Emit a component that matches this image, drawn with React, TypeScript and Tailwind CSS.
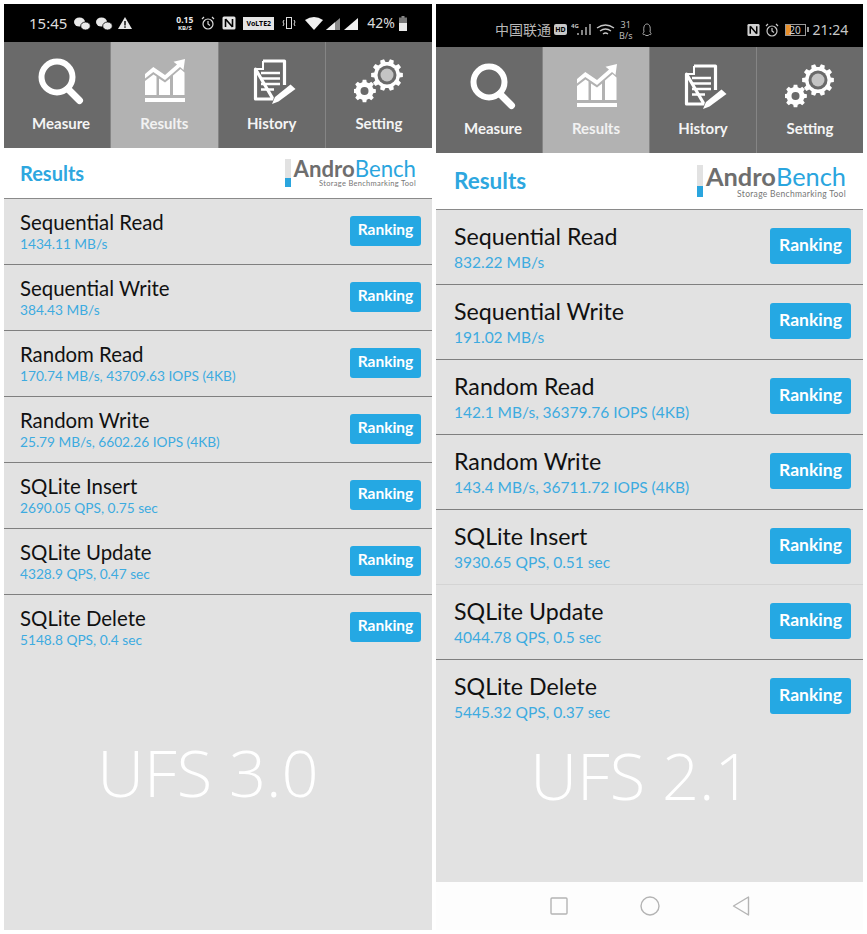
import React from "react";

const font = { fontFamily: 'Lato, "Noto Sans CJK SC", sans-serif' };

function gearPath(cx: number, cy: number, R: number, r: number, n: number) {
  const pts: string[] = [];
  const step = (2 * Math.PI) / n;
  for (let i = 0; i < n; i++) {
    const a = i * step;
    const at = (rad: number, ang: number) => `${(cx + rad * Math.cos(ang)).toFixed(2)} ${(cy + rad * Math.sin(ang)).toFixed(2)}`;
    pts.push(at(r, a - step * 0.32), at(R, a - step * 0.2), at(R, a + step * 0.2), at(r, a + step * 0.32));
  }
  return "M" + pts.join(" L") + " Z";
}

function Magnifier() {
  return (
    <svg width="46" height="48" viewBox="0 0 46 48" fill="none" stroke="white">
      <circle cx="19" cy="19" r="15.5" strokeWidth="6" />
      <path d="M30 31 L41.5 42.5" strokeWidth="7" strokeLinecap="round" />
    </svg>
  );
}
function ChartIcon() {
  return (
    <svg width="46" height="48" viewBox="0 0 46 48" fill="white">
      <path d="M4 16 L12.3 9 L24 17 L36 6.5 L32.5 3.8 L44 1 L42.5 12 L39 9 L24 22 L12.3 14 L4 20.5 Z" />
      <path d="M4 23 L12.5 16.5 L15.5 18.5 V37 H4 Z M18 20.5 L24 24.5 L29 20.5 V37 H18 Z M32 17.5 L39.5 11 L43.5 14.5 V37 H32 Z" />
      <rect x="4" y="40" width="40" height="4" />
    </svg>
  );
}
function HistoryIcon() {
  return (
    <svg width="50" height="48" viewBox="0 0 50 48" fill="none">
      <path d="M16 3 H37.5 V27 M26 41 H8.5 V11 Z" stroke="white" strokeWidth="3.2" strokeLinejoin="round" />
      <path d="M16 3 V11 H8.5" stroke="white" strokeWidth="2" />
      <path d="M14 15 H33 M14 20.5 H33 M14 26 H33 M14 31.5 H27" stroke="white" strokeWidth="2.6" />
      <path d="M44 25 L50 31 L32 45 L24.5 47.5 L27 39 Z" fill="#6a6a6a" />
      <path d="M43.5 26.5 L48.5 31 L31.5 43.5 L25 46 L28 39 Z" fill="white" />
    </svg>
  );
}
function GearsIcon() {
  return (
    <svg width="50" height="48" viewBox="0 0 50 48">
      <path d={gearPath(33, 17, 16, 13, 10)} fill="white" />
      <circle cx="33" cy="17" r="9.5" fill="#6a6a6a" />
      <circle cx="33" cy="17" r="6.5" fill="#c4c4c4" />
      <path d={gearPath(10.5, 33, 11.5, 9, 8)} fill="white" />
      <circle cx="10.5" cy="33" r="4" fill="#6a6a6a" />
    </svg>
  );
}

function WeChat({ x }: { x: number }) {
  return (
    <g fill="#e8e8e8">
      <ellipse cx={x + 5.5} cy={7} rx={5.5} ry={4.6} />
      <ellipse cx={x + 11.5} cy={11} rx={4.8} ry={4} stroke="black" strokeWidth="0.8" />
    </g>
  );
}

function LeftStatus() {
  return (
    <div className="relative h-[38px] bg-black shrink-0 flex items-center pl-[25px] text-[#dcdcdc]" style={{ fontFamily: '"Noto Sans", sans-serif' }}>
      <span className="text-[15px] leading-none">15:45</span>
      <svg className="ml-[7px]" width="58" height="16" viewBox="0 0 58 16">
        <WeChat x={0} />
        <WeChat x={22} />
        <path d="M51 2 L58 14 H44 Z" fill="#e8e8e8" />
        <rect x="50.3" y="6" width="1.4" height="4.5" fill="black" />
        <rect x="50.3" y="11.3" width="1.4" height="1.5" fill="black" />
      </svg>
      <span className="ml-[44px] flex flex-col items-center text-[8.5px] font-bold leading-[10px] text-[#e8e8e8]">
        <span>0.15</span>
        <span className="text-[6px] leading-[7px]">KB/S</span>
      </span>
      <svg className="ml-[8px]" width="14" height="14" viewBox="0 0 14 14" fill="none" stroke="#dcdcdc" strokeWidth="1.2">
        <circle cx="7" cy="8" r="5" />
        <path d="M7 5 V8 L9 9.5 M1 3 L3 1 M13 3 L11 1" />
      </svg>
      <svg className="ml-[7px]" width="14" height="14" viewBox="0 0 14 14">
        <rect x="0.5" y="0.5" width="13" height="13" rx="1.5" fill="#e4e4e4" />
        <path d="M3.5 3 V11 M10.5 3 V11 M3.5 3 L10.5 11" stroke="black" strokeWidth="1.6" fill="none" />
      </svg>
      <span className="ml-[7px] w-[31px] h-[13px] bg-[#e4e4e4] text-black text-[7px] font-bold leading-[13px] text-center">VoLTE2</span>
      <svg className="ml-[8px]" width="14" height="14" viewBox="0 0 14 14" fill="none" stroke="#dcdcdc" strokeWidth="1">
        <rect x="4.5" y="1.5" width="5" height="11" />
        <path d="M2 4 L1 6 L2 8 L1 10 M12 4 L13 6 L12 8 L13 10" />
      </svg>
      <svg className="ml-[9px]" width="54" height="16" viewBox="0 0 54 16">
        <path d="M0 5 Q9 -1 18 5 L9 15 Z" fill="#f0f0f0" />
        <path d="M21 15 L35 3 V15 Z" fill="#8a8a8a" />
        <path d="M21 15 L30 7.3 V15 Z" fill="#f0f0f0" />
        <path d="M39 15 L53 3 V15 Z" fill="#f0f0f0" />
      </svg>
      <span className="ml-[8px] text-[14px] leading-none">42%</span>
      <svg className="ml-[4px]" width="8" height="15" viewBox="0 0 8 15">
        <rect x="2.5" y="0" width="3" height="2" fill="#8a8a8a" />
        <rect x="0" y="1.5" width="8" height="6" fill="#777" />
        <rect x="0" y="7" width="8" height="8" fill="#e8e8e8" />
      </svg>
    </div>
  );
}

function RightStatus() {
  return (
    <div className="relative h-[43px] bg-black shrink-0 flex items-center pt-[8px] pl-[59px] text-[#c8c8c8]" style={{ fontFamily: '"Noto Sans", "Noto Sans CJK SC", sans-serif' }}>
      <span className="text-[14px] leading-none text-[#b8b8b8]">中国联通</span>
      <span className="ml-[3px] w-[13px] h-[11px] rounded-[2px] bg-[#c8c8c8] text-black text-[7px] font-bold leading-[11px] text-center">HD</span>
      <svg className="ml-[4px]" width="44" height="16" viewBox="0 0 44 16" fill="none" stroke="#c8c8c8">
        <path d="M7 13 V11 M11 13 V8 M15 13 V5 M19 13 V2" strokeWidth="1.3" />
        <path d="M26 6 Q34.5 0 43 6 M29 9 Q34.5 5 40 9 M32 12 Q34.5 10 37 12" strokeWidth="1.3" />
        <text x="0" y="6" fontSize="6" fill="#c8c8c8" stroke="none" fontWeight="bold">4G</text>
      </svg>
      <span className="ml-[4px] flex flex-col items-center text-[9px] leading-[11px] text-[#bbb]">
        <span>31</span>
        <span>B/s</span>
      </span>
      <svg className="ml-[8px]" width="12" height="14" viewBox="0 0 12 14" fill="none" stroke="#aaa" strokeWidth="1">
        <path d="M3 9 C1 11 2 12 3.5 11.5 C5 13 7 13 8.5 11.5 C10 12 11 11 9 9 C10 3 8 1 6 1 C4 1 2 3 3 9 Z" />
      </svg>
      <svg className="ml-[94px]" width="13" height="14" viewBox="0 0 14 14">
        <rect x="0.5" y="0.5" width="13" height="13" rx="1.5" fill="#d0d0d0" />
        <path d="M3.5 3 V11 M10.5 3 V11 M3.5 3 L10.5 11" stroke="black" strokeWidth="1.6" fill="none" />
      </svg>
      <svg className="ml-[5px]" width="14" height="14" viewBox="0 0 14 14" fill="none" stroke="#c8c8c8" strokeWidth="1.2">
        <circle cx="7" cy="8" r="5" />
        <path d="M7 5 V8 L9 9.5 M1 3 L3 1 M13 3 L11 1" />
      </svg>
      <span className="relative ml-[6px] w-[21px] h-[12px] border border-[#999] text-[10px] leading-[10px] text-[#ccc] text-center overflow-hidden">
        <span className="absolute left-0 top-0 bottom-0 w-[5px] bg-[#e8902a]" />
        <span className="relative">20</span>
      </span>
      <span className="ml-[1px] w-[2px] h-[5px] bg-[#999]" />
      <span className="ml-[4px] text-[14px] leading-none">21:24</span>
    </div>
  );
}

function Tabs() {
  const label = "mt-[5px] text-[15px] font-bold leading-[24px]";
  return (
    <div className="h-[106px] shrink-0 grid grid-cols-4 gap-px bg-[#858585]">
      <div className="flex flex-col items-center pt-[16px] pl-[8px] bg-[#6a6a6a]">
        <Magnifier />
        <span className={`${label} text-[#f4f4f4]`}>Measure</span>
      </div>
      <div className="flex flex-col items-center pt-[16px] bg-[#b2b2b2]">
        <ChartIcon />
        <span className={`${label} text-[#f2f2f2]`}>Results</span>
      </div>
      <div className="flex flex-col items-center pt-[16px] bg-[#6a6a6a]">
        <HistoryIcon />
        <span className={`${label} text-[#f4f4f4]`}>History</span>
      </div>
      <div className="flex flex-col items-center pt-[16px] bg-[#6a6a6a]">
        <GearsIcon />
        <span className={`${label} text-[#f4f4f4]`}>Setting</span>
      </div>
    </div>
  );
}

function Logo({ big }: { big: boolean }) {
  return (
    <div className="flex items-start">
      <div className={big ? "flex flex-col w-[6px] h-[32px] mt-[1px] mr-[3px]" : "flex flex-col w-[6px] h-[28px] mt-[1px] mr-[3px]"}>
        <div className="flex-[2] bg-[#e2e2e2]" />
        <div className="flex-1 bg-[#2aa5de]" />
      </div>
      <div className="flex flex-col items-end">
        <div className={big ? "text-[25.4px] leading-[25px]" : "text-[22.2px] leading-[22px]"}>
          <span className="font-bold text-[#6e6e6e]">Andro</span>
          <span className="text-[#2aa5de]">Bench</span>
        </div>
        <div className={big ? "text-[8.5px] leading-[10px] text-[#777] tracking-[0.3px]" : "text-[7.5px] leading-[8px] text-[#777] tracking-[0.3px]"}>
          Storage Benchmarking Tool
        </div>
      </div>
    </div>
  );
}

function Row({ title, value, big, faint, last }: { title: string; value: string; big: boolean; faint?: boolean; last?: boolean }) {
  const cls = big
    ? "h-[75px] flex items-center justify-between pl-[18px] pr-[12px] border-b"
    : "h-[66px] flex items-center justify-between pl-[16px] pr-[11px] border-b";
  const line = last ? "border-transparent" : faint ? "border-[#d4d4d4]" : "border-[#7f7f7f]";
  return (
    <div className={`${cls} ${line}`}>
      <div className="min-w-0">
        <div className={big ? "text-[23.2px] leading-[29px] text-[#111]" : "text-[20.4px] leading-[25px] text-[#111]"}>{title}</div>
        <div className={big ? "text-[15.5px] leading-[22px] text-[#3dabe0]" : "text-[13.7px] leading-[18px] text-[#3dabe0]"}>{value}</div>
      </div>
      <div
        className={
          big
            ? "w-[81px] h-[36px] mb-[2px] pb-[1px] rounded-[3px] bg-[#25a8e3] text-white text-[17.5px] font-bold flex items-center justify-center"
            : "w-[71px] h-[30px] mb-[2px] pb-[2px] rounded-[3px] bg-[#25a8e3] text-white text-[15.5px] font-bold flex items-center justify-center"
        }
      >
        Ranking
      </div>
    </div>
  );
}

const leftRows = [
  ["Sequential Read", "1434.11 MB/s"],
  ["Sequential Write", "384.43 MB/s"],
  ["Random Read", "170.74 MB/s, 43709.63 IOPS (4KB)"],
  ["Random Write", "25.79 MB/s, 6602.26 IOPS (4KB)"],
  ["SQLite Insert", "2690.05 QPS, 0.75 sec"],
  ["SQLite Update", "4328.9 QPS, 0.47 sec"],
  ["SQLite Delete", "5148.8 QPS, 0.4 sec"],
];
const rightRows = [
  ["Sequential Read", "832.22 MB/s"],
  ["Sequential Write", "191.02 MB/s"],
  ["Random Read", "142.1 MB/s, 36379.76 IOPS (4KB)"],
  ["Random Write", "143.4 MB/s, 36711.72 IOPS (4KB)"],
  ["SQLite Insert", "3930.65 QPS, 0.51 sec"],
  ["SQLite Update", "4044.78 QPS, 0.5 sec"],
  ["SQLite Delete", "5445.32 QPS, 0.37 sec"],
];

const bigText = { fontFamily: '"Open Sans", sans-serif' };

export default function App() {
  return (
    <div className="w-[867px] h-[934px] bg-white flex items-start pl-[4px] pt-[4px] gap-[4px]" style={font}>
      <div className="w-[428px] h-[926px] flex flex-col bg-[#e2e2e2]">
        <LeftStatus />
        <Tabs />
        <div className="h-[51px] shrink-0 bg-white border-b border-[#8a8a8a] flex items-center justify-between pl-[16px] pr-[16px]">
          <span className="text-[20px] font-bold text-[#2ea7df]">Results</span>
          <Logo big={false} />
        </div>
        {leftRows.map(([t, v], i) => (
          <Row key={t} title={t} value={v} big={false} last={i === 6} />
        ))}
        <div className="flex-1 flex justify-center pt-[69px] pr-[20px]">
          <span className="text-[65px] font-light leading-[84px] text-white" style={bigText}>UFS 3.0</span>
        </div>
      </div>
      <div className="w-[427px] h-[926px] flex flex-col bg-[#e2e2e2]">
        <RightStatus />
        <Tabs />
        <div className="h-[57px] shrink-0 bg-white border-b border-[#8a8a8a] flex items-center justify-between pl-[18px] pr-[17px]">
          <span className="text-[22.5px] font-bold text-[#2ea7df]">Results</span>
          <Logo big />
        </div>
        {rightRows.map(([t, v], i) => (
          <Row key={t} title={t} value={v} big faint={i === 4} last={i === 6} />
        ))}
        <div className="flex-1 flex justify-center pr-[17px]">
          <span className="text-[65px] font-light leading-[80px] text-white" style={bigText}>UFS 2.1</span>
        </div>
        <div className="h-[48px] shrink-0 bg-[#fdfdfd] flex items-center justify-center gap-[72px]">
          <svg width="18" height="18" viewBox="0 0 18 18" fill="none" stroke="#b4b4b4" strokeWidth="1.4"><rect x="1" y="1" width="16" height="16" rx="1" /></svg>
          <svg width="20" height="20" viewBox="0 0 20 20" fill="none" stroke="#b4b4b4" strokeWidth="1.4"><circle cx="10" cy="10" r="9" /></svg>
          <svg width="18" height="20" viewBox="0 0 18 20" fill="none" stroke="#b4b4b4" strokeWidth="1.4"><path d="M16.5 1 V19 L1.5 10 Z" strokeLinejoin="round" /></svg>
        </div>
      </div>
    </div>
  );
}
